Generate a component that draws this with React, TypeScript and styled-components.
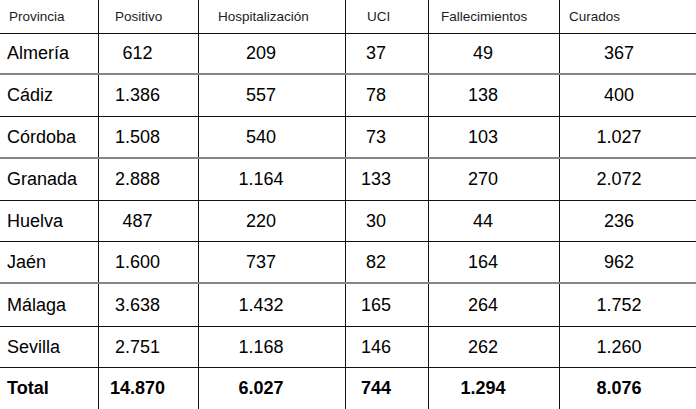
import styled, { createGlobalStyle } from "styled-components";

const GlobalStyle = createGlobalStyle`
    html, body {
        margin: 0;
        padding: 0;
        background: #fff;
    }
    body {
        font-family: "Liberation Sans", Arial, sans-serif;
        color: #000;
    }
`;

const Table = styled.div`
    width: 696px;
    height: 409px;
    overflow: hidden;
    display: flex;
    flex-direction: column;
`;

type Line = "dark" | "gray" | "none";

const Row = styled.div<{ $h: number; $line: Line }>`
    display: grid;
    grid-template-columns: 99px 100px 147px 83px 131px 1fr;
    height: ${p => p.$h}px;
    box-sizing: border-box;
    border-bottom: ${p =>
        p.$line === "dark" ? "1px solid #111" : p.$line === "gray" ? "2px solid #858585" : "none"};
`;

const HeadCell = styled.div<{ $pad: number }>`
    display: flex;
    align-items: center;
    padding-left: ${p => p.$pad}px;
    font-size: 13.5px;
    color: #1c1c1c;
    border-right: 1px solid #111;
    &:last-child {
        border-right: none;
    }
`;

const NameCell = styled.div<{ $bold?: boolean }>`
    display: flex;
    align-items: center;
    padding-left: 7px;
    font-size: 18px;
    font-weight: ${p => (p.$bold ? 700 : 400)};
    border-right: 1px solid #111;
`;

const NumCell = styled.div<{ $bold?: boolean }>`
    display: flex;
    align-items: center;
    justify-content: center;
    padding-right: 22px;
    font-size: 18px;
    font-weight: ${p => (p.$bold ? 700 : 400)};
    border-right: 1px solid #111;
    &:last-child {
        border-right: none;
        padding-right: 18px;
    }
`;

const headers = [
    { label: "Provincia", pad: 9 },
    { label: "Positivo", pad: 16 },
    { label: "Hospitalización", pad: 19 },
    { label: "UCI", pad: 21 },
    { label: "Fallecimientos", pad: 12 },
    { label: "Curados", pad: 9 },
];

const rows: { name: string; values: string[]; h: number; line: Line }[] = [
    { name: "Almería", values: ["612", "209", "37", "49", "367"], h: 41, line: "gray" },
    { name: "Cádiz", values: ["1.386", "557", "78", "138", "400"], h: 42, line: "dark" },
    { name: "Córdoba", values: ["1.508", "540", "73", "103", "1.027"], h: 42, line: "gray" },
    { name: "Granada", values: ["2.888", "1.164", "133", "270", "2.072"], h: 42, line: "dark" },
    { name: "Huelva", values: ["487", "220", "30", "44", "236"], h: 41, line: "dark" },
    { name: "Jaén", values: ["1.600", "737", "82", "164", "962"], h: 42, line: "gray" },
    { name: "Málaga", values: ["3.638", "1.432", "165", "264", "1.752"], h: 43, line: "dark" },
    { name: "Sevilla", values: ["2.751", "1.168", "146", "262", "1.260"], h: 41, line: "dark" },
];

const total = ["14.870", "6.027", "744", "1.294", "8.076"];

export default function App() {
    return (
        <>
            <GlobalStyle />
            <Table>
                <Row $h={34} $line="dark">
                    {headers.map(h => (
                        <HeadCell key={h.label} $pad={h.pad}>{h.label}</HeadCell>
                    ))}
                </Row>
                {rows.map(r => (
                    <Row key={r.name} $h={r.h} $line={r.line}>
                        <NameCell>{r.name}</NameCell>
                        {r.values.map((v, i) => (
                            <NumCell key={i}>{v}</NumCell>
                        ))}
                    </Row>
                ))}
                <Row $h={41} $line="none">
                    <NameCell $bold>Total</NameCell>
                    {total.map((v, i) => (
                        <NumCell key={i} $bold>{v}</NumCell>
                    ))}
                </Row>
            </Table>
        </>
    );
}
